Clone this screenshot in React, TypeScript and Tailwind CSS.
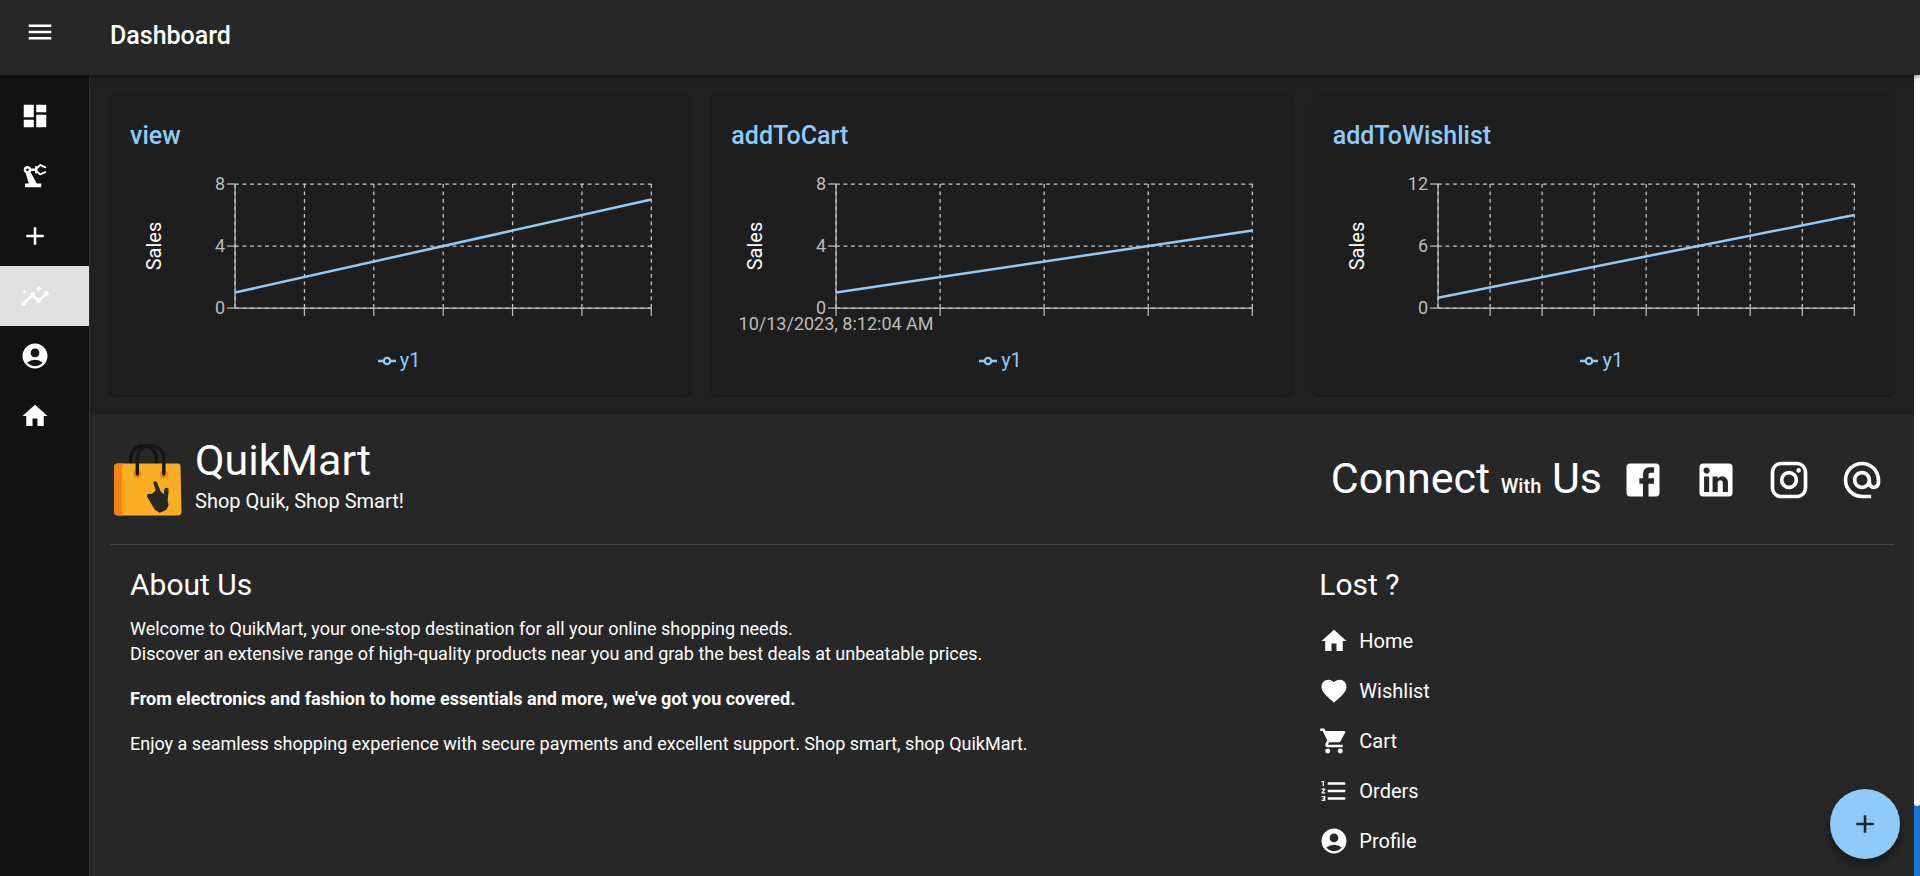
import React from "react";
import {
  MdMenu, MdDashboard, MdPrecisionManufacturing, MdAdd, MdInsights, MdAccountCircle, MdHome,
  MdFavorite, MdShoppingCart, MdFormatListNumbered, MdAlternateEmail,
} from "react-icons/md";

type Chart = { title: string; count: number; max: number; label?: string };

const charts: Chart[] = [
  { title: "view", count: 7, max: 8 },
  { title: "addToCart", count: 5, max: 8, label: "10/13/2023, 8:12:04 AM" },
  { title: "addToWishlist", count: 9, max: 12 },
];

const rail = [
  { name: "Dashboard", Icon: MdDashboard },
  { name: "Manufacturing", Icon: MdPrecisionManufacturing },
  { name: "Add", Icon: MdAdd },
  { name: "Insights", Icon: MdInsights, active: true },
  { name: "Account", Icon: MdAccountCircle },
  { name: "Home", Icon: MdHome },
];

const links = [
  { name: "Home", Icon: MdHome },
  { name: "Wishlist", Icon: MdFavorite },
  { name: "Cart", Icon: MdShoppingCart },
  { name: "Orders", Icon: MdFormatListNumbered },
  { name: "Profile", Icon: MdAccountCircle },
];

const FACEBOOK =
  "M5 3h14a2 2 0 0 1 2 2v14a2 2 0 0 1-2 2H5a2 2 0 0 1-2-2V5a2 2 0 0 1 2-2m13 2h-2.5A3.5 3.5 0 0 0 12 8.5V11h-2v3h2v7h3v-7h3v-3h-3V9a1 1 0 0 1 1-1h2V5z";
const LINKEDIN =
  "M19 3a2 2 0 0 1 2 2v14a2 2 0 0 1-2 2H5a2 2 0 0 1-2-2V5a2 2 0 0 1 2-2h14m-.5 15.5v-5.3a3.26 3.26 0 0 0-3.26-3.26c-.85 0-1.84.52-2.32 1.3v-1.11h-2.79v8.37h2.79v-4.93c0-.77.62-1.4 1.39-1.4a1.4 1.4 0 0 1 1.4 1.4v4.93h2.79M6.88 8.56a1.68 1.68 0 0 0 1.68-1.68c0-.93-.75-1.69-1.68-1.69a1.69 1.69 0 0 0-1.69 1.69c0 .93.76 1.68 1.69 1.68m1.39 9.94v-8.37H5.5v8.37h2.77z";
const INSTAGRAM =
  "M7.8 2h8.4C19.4 2 22 4.6 22 7.8v8.4a5.8 5.8 0 0 1-5.8 5.8H7.8C4.6 22 2 19.4 2 16.2V7.8A5.8 5.8 0 0 1 7.8 2m-.2 2A3.6 3.6 0 0 0 4 7.6v8.8C4 18.39 5.61 20 7.6 20h8.8a3.6 3.6 0 0 0 3.6-3.6V7.6C20 5.61 18.39 4 16.4 4H7.6m9.65 1.5a1.25 1.25 0 0 1 1.25 1.25A1.25 1.25 0 0 1 17.25 8 1.25 1.25 0 0 1 16 6.75a1.25 1.25 0 0 1 1.25-1.25M12 7a5 5 0 0 1 5 5 5 5 0 0 1-5 5 5 5 0 0 1-5-5 5 5 0 0 1 5-5m0 2a3 3 0 0 0-3 3 3 3 0 0 0 3 3 3 3 0 0 0 3-3 3 3 0 0 0-3-3z";

const LEFT = 105;
const RIGHT = 521;
const TOP = 14;
const BOTTOM = 138;

function LineChart({ count, max, label }: Chart) {
  const xs = Array.from({ length: count }, (_, i) => LEFT + ((RIGHT - LEFT) * i) / (count - 1));
  const y = (v: number) => BOTTOM - ((BOTTOM - TOP) * v) / max;
  const ticks = [0, max / 2, max];
  return (
    <svg viewBox="0 0 541 170" className="mt-[14px] block w-full overflow-visible" role="img" aria-label="Sales over time">
      <g stroke="#ccc" strokeWidth="1.25" strokeDasharray="3.75 3.75">
        {ticks.map((t) => <line key={t} x1={LEFT} x2={RIGHT} y1={y(t)} y2={y(t)} />)}
        {xs.map((x) => <line key={x} x1={x} x2={x} y1={TOP} y2={BOTTOM} />)}
      </g>
      <g stroke="#bcbcbc" strokeWidth="1.25">
        <line x1={LEFT} x2={RIGHT} y1={BOTTOM} y2={BOTTOM} />
        <line x1={LEFT} x2={LEFT} y1={TOP} y2={BOTTOM} />
        {ticks.map((t) => <line key={t} x1={LEFT - 8} x2={LEFT} y1={y(t)} y2={y(t)} />)}
        {xs.slice(label ? 0 : 1).map((x) => <line key={x} x1={x} x2={x} y1={BOTTOM} y2={BOTTOM + 8} />)}
      </g>
      <g fill="#bcbcbc" fontSize="18">
        {ticks.map((t) => <text key={t} x={LEFT - 10} y={y(t) + 6} textAnchor="end">{t}</text>)}
        {label && <text x={LEFT} y={BOTTOM + 22} textAnchor="middle">{label}</text>}
      </g>
      <text transform="translate(31 76) rotate(-90)" textAnchor="middle" fontSize="20" fill="#fff">Sales</text>
      <line x1={LEFT} y1={y(1)} x2={RIGHT} y2={y(count)} stroke="#90caf9" strokeWidth="2.5" />
    </svg>
  );
}

function Logo() {
  return (
    <svg viewBox="5 5 80 80" className="mr-[5px] size-[80px]" aria-hidden="true">
      <path d="M25.5 31v-7c0-17.4 26-17.4 26 0v7" fill="none" stroke="#121414" strokeWidth="3.2" />
      <path d="M13 28.5h60q2.5 0 2.5 3l1 45q0 4-4 4H13q-4 0-4-4v-44q0-4 4-4z" fill="#f9ae24" />
      <path d="M13 28.5h8q-4 0-4 4v44q0 4 4 4h-8q-4 0-4-4v-44q0-4 4-4z" fill="#f98012" />
      <circle cx="32.3" cy="39.3" r="4" fill="#f98012" />
      <circle cx="58.8" cy="39.3" r="4" fill="#f98012" />
      <path d="M32.3 39V24.5c0-18.5 26.5-18.5 26.5 0v14.5" fill="none" stroke="#141817" strokeWidth="3.4" strokeLinecap="round" />
      <path
        d="M48.2 47.6q1.8-2.6 4 .2l3.4 8.4 3.2 3 .6-5q1.6-2.4 4-.6l.2 3-1 8.6 1 5-2.2 4.6-6.6 3-5-3-7.8-13.4q0-2.4 2-2.6l2.6.2 4.2-3.4z"
        fill="#272727"
      />
    </svg>
  );
}

function Social({ name, path }: { name: string; path?: string }) {
  return (
    <a href="#" aria-label={name} className="p-[10px]">
      {path ? (
        <svg viewBox="0 0 24 24" className="size-11" fill="currentColor"><path d={path} /></svg>
      ) : (
        <MdAlternateEmail className="size-11" />
      )}
    </a>
  );
}

export default function App() {
  return (
    <div className="flex min-h-screen flex-col bg-[#212121] font-[Roboto,sans-serif] text-white">
      <header className="relative z-10 flex h-[75px] items-center bg-[#272727] shadow-[0_2px_5px_rgba(0,0,0,0.5)]">
        <button aria-label="Menu" className="mb-[11px] ml-[25px] mr-[55px]"><MdMenu className="size-[30px]" /></button>
        <h1 className="mb-1 text-[25px] font-medium">Dashboard</h1>
      </header>

      <div className="flex flex-1">
        <nav className="w-[90px] shrink-0 border-r border-[#333] bg-[#121212] pt-[11px]">
          {rail.map(({ name, Icon, active }) => (
            <a
              key={name}
              href="#"
              aria-label={name}
              className={active ? "flex h-[60px] items-center bg-[#e0e0e0] pl-5" : "flex h-[60px] items-center pl-5"}
            >
              <Icon className="size-[30px]" />
            </a>
          ))}
        </nav>

        <div className="flex min-w-0 flex-1 flex-col">
          <main className="grid grid-cols-3 gap-5 p-5">
            {charts.map((chart) => (
              <section
                key={chart.title}
                className="rounded-[5px] bg-[#1e1e1e] px-5 pt-[21px] pb-5 shadow-[0_2px_2px_rgba(0,0,0,0.18),0_0_2px_rgba(0,0,0,0.12)]"
              >
                <h2 className="text-[25px] leading-10 font-medium text-[#90caf9]">{chart.title}</h2>
                <LineChart {...chart} />
                <div className="mt-[5px] flex items-center justify-center gap-1 pr-[3px] text-[20px] leading-[30px] text-[#90caf9]">
                  <svg viewBox="0 0 18 18" className="mt-[2px] size-[18px]" fill="none" stroke="currentColor" strokeWidth="2.3" aria-hidden="true">
                    <path d="M0 9h6M12 9h6" />
                    <circle cx="9" cy="9" r="3.2" />
                  </svg>
                  <span>y1</span>
                </div>
              </section>
            ))}
          </main>

          <footer className="flex-1 bg-[#272727] px-5 pt-[19px]">
            <div className="flex h-[91px] items-center">
              <Logo />
              <div className="self-start">
                <p className="text-[43px] leading-[52px]">QuikMart</p>
                <p className="text-[20px] leading-[30px]">Shop Quik, Shop Smart!</p>
              </div>
              <div className="ml-auto flex items-center gap-[9px]">
                <p className="pt-1 text-[43px] leading-[52px]">
                  Connect <span className="text-[20px] font-medium">With</span> Us
                </p>
                <Social name="Facebook" path={FACEBOOK} />
                <Social name="LinkedIn" path={LINKEDIN} />
                <Social name="Instagram" path={INSTAGRAM} />
                <Social name="Email" />
              </div>
            </div>
            <hr className="mt-[19px] border-[#434343]" />
            <div className="grid grid-cols-3 pt-5">
              <section className="col-span-2 px-5">
                <h2 className="mb-[11px] text-[30px] leading-10">About Us</h2>
                <div className="flex flex-col gap-5 text-[18px] leading-[25px]">
                  <p>
                    Welcome to QuikMart, your one-stop destination for all your online shopping needs.
                    <br />
                    Discover an extensive range of high-quality products near you and grab the best deals at unbeatable prices.
                  </p>
                  <p className="font-bold">From electronics and fashion to home essentials and more, we've got you covered.</p>
                  <p>Enjoy a seamless shopping experience with secure payments and excellent support. Shop smart, shop QuikMart.</p>
                </div>
              </section>
              <section className="px-5">
                <h2 className="mb-[11px] text-[30px] leading-10">Lost ?</h2>
                <ul>
                  {links.map(({ name, Icon }) => (
                    <li key={name}>
                      <a href="#" className="flex h-[50px] items-center gap-[10px] text-[20px]">
                        <Icon className="size-[30px]" />
                        {name}
                      </a>
                    </li>
                  ))}
                </ul>
              </section>
            </div>
          </footer>
        </div>

        <div className="flex w-[6px] shrink-0 flex-col bg-[#1976d2]" aria-hidden="true">
          <div className="mb-[70px] flex-1 rounded-b-[3px] bg-white" />
        </div>
      </div>

      <button
        aria-label="Add item"
        className="fixed right-5 bottom-[17px] z-20 flex size-[70px] items-center justify-center rounded-full bg-[#90caf9] text-[#1c2329] shadow-[0_4px_6px_rgba(0,0,0,0.25),0_8px_14px_rgba(0,0,0,0.2)]"
      >
        <MdAdd className="size-[30px]" />
      </button>
    </div>
  );
}
